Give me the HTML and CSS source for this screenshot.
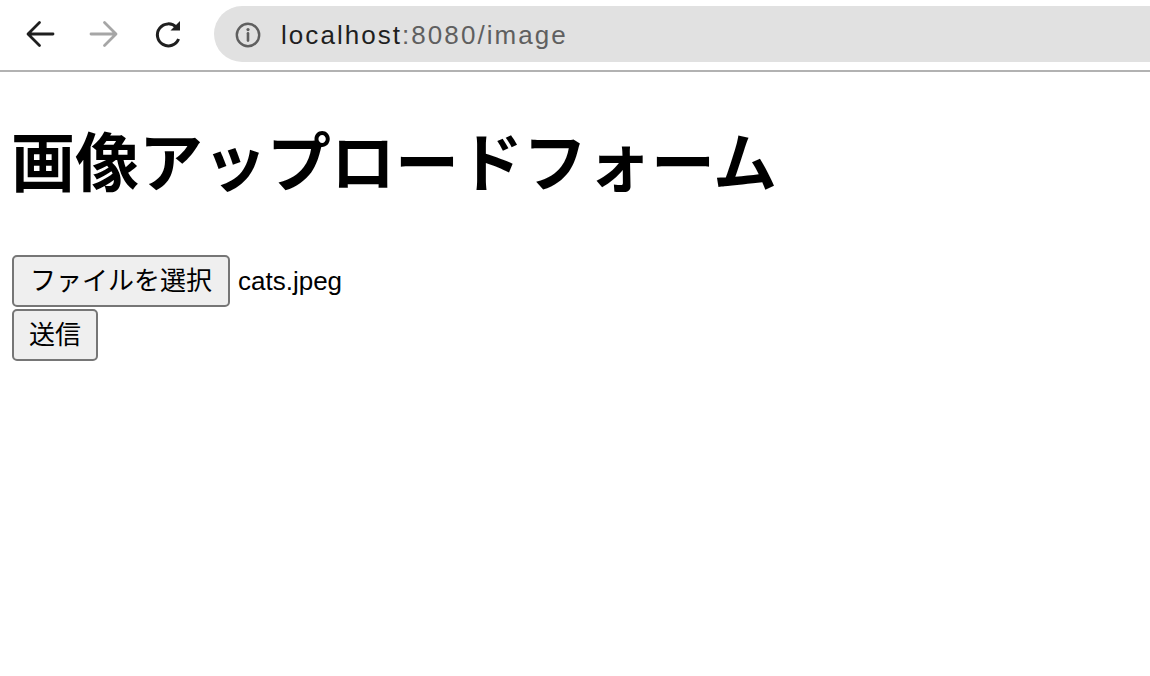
FILE: index.html
```html
<!DOCTYPE html>
<html lang="ja">
<head>
<meta charset="utf-8">
<title>画像アップロードフォーム</title>
<link rel="stylesheet" href="styles.css">
</head>
<body>
<div class="chrome">
  <div class="nav">
    <svg class="icon back" width="30" height="30" viewBox="0 0 30 30"><path d="M28 15H3.5M14.5 3.5L3 15l11.5 11.5" fill="none" stroke="#1f1f1f" stroke-width="2.8" stroke-linecap="round" stroke-linejoin="round"/></svg>
    <svg class="icon fwd" width="30" height="30" viewBox="0 0 30 30"><path d="M2 15h24.5M15.5 3.5L27 15 15.5 26.5" fill="none" stroke="#a6a6a6" stroke-width="2.8" stroke-linecap="round" stroke-linejoin="round"/></svg>
    <svg class="icon reload" width="30" height="30" viewBox="0 0 30 30"><path d="M25.6 20A11 11 0 1 1 23.3 8.2" fill="none" stroke="#1f1f1f" stroke-width="3"/><path d="M17.5 11.5L27 2v9.5z" fill="#1f1f1f"/></svg>
  </div>
  <div class="omnibox">
    <svg class="info" width="28" height="28" viewBox="0 0 28 28"><circle cx="14" cy="14" r="11.2" fill="none" stroke="#5f5f5f" stroke-width="2.4"/><circle cx="14" cy="8.6" r="1.6" fill="#5f5f5f"/><path d="M14 12.2v7.4" stroke="#5f5f5f" stroke-width="2.6" stroke-linecap="round"/></svg>
    <span class="url"><span class="host">localhost</span><span class="path">:8080/image</span></span>
  </div>
</div>
<main class="page">
  <h1 class="title">画像アップロードフォーム</h1>
  <form class="form">
    <div class="row">
      <button type="button" class="btn btn-file">ファイルを選択</button>
      <span class="filename">cats.jpeg</span>
    </div>
    <div class="row second">
      <button type="button" class="btn">送信</button>
    </div>
  </form>
</main>
</body>
</html>
```
FILE: styles.css
```css
html, body {
  margin: 0;
  padding: 0;
  background: #ffffff;
}
body {
  font-family: "Liberation Sans", "Noto Sans CJK JP", sans-serif;
  color: #000;
}
.chrome {
  height: 70px;
  border-bottom: 2px solid #b2b2b2;
  display: flex;
  align-items: flex-start;
  box-sizing: content-box;
}
.nav {
  display: flex;
  align-items: center;
  height: 56px;
  margin-top: 6px;
  padding-left: 25px;
  gap: 34px;
}
.icon {
  display: block;
}
.omnibox {
  margin-top: 6px;
  margin-left: 31px;
  flex: 1;
  height: 56px;
  background: #e1e1e1;
  border-radius: 28px 0 0 28px;
  display: flex;
  align-items: center;
  padding-left: 20px;
}
.info {
  display: block;
  margin-top: 1px;
}
.url {
  margin-left: 19px;
  font-family: "Liberation Sans", sans-serif;
  font-size: 26px;
  letter-spacing: 2.05px;
  line-height: 30px;
  margin-top: 2px;
}
.host {
  color: #1f1f1f;
}
.path {
  color: #5f5f5f;
}
.page {
  padding: 0 8px;
}
.title {
  margin: 48px 0 59px 3px;
  font-family: "Noto Sans CJK JP", sans-serif;
  font-weight: 700;
  font-size: 64px;
  line-height: 76px;
}
.form {
  padding-left: 4px;
}
.row {
  display: flex;
  align-items: center;
  gap: 8px;
}
.row.second {
  margin-top: 2px;
}
.btn {
  font-family: "Liberation Sans", "Noto Sans CJK JP", sans-serif;
  font-size: 26px;
  line-height: 38px;
  padding: 5px 15px;
  border: 2px solid #767676;
  border-radius: 5px;
  background: #efefef;
  color: #000;
  margin: 0;
}
.btn-file {
  padding: 5px 16px;
}
.filename {
  font-size: 26px;
  line-height: 38px;
}
```
